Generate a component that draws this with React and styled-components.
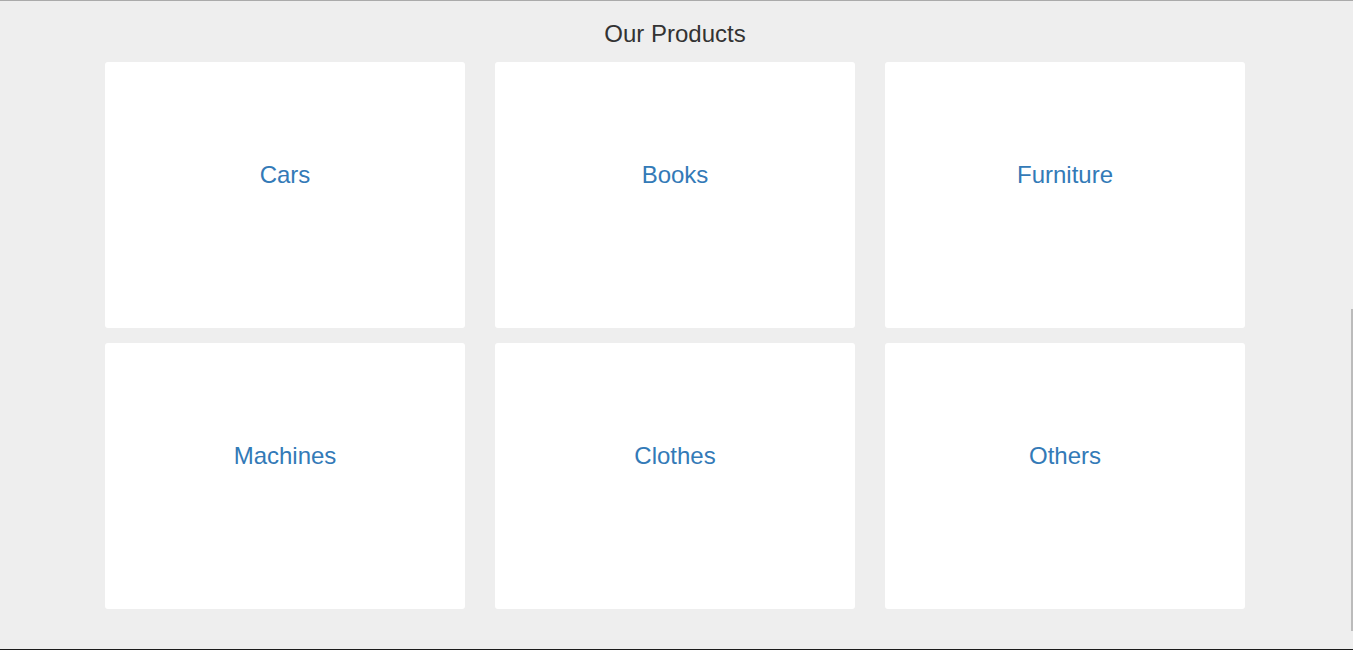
import styled, { createGlobalStyle } from 'styled-components';

const products = ['Cars', 'Books', 'Furniture', 'Machines', 'Clothes', 'Others'];

const GlobalStyle = createGlobalStyle`
  html, body {
    margin: 0;
    padding: 0;
    background: #eeeeee;
    font-family: "Liberation Sans", Arial, sans-serif;
  }
`;

const App = () => {
  return (
    <Page>
      <GlobalStyle />
      <Title>Our Products</Title>
      <Grid>
        {products.map((name) => (
          <Card key={name}>
            <CardLink href="#">{name}</CardLink>
          </Card>
        ))}
      </Grid>
      <ScrollMark />
    </Page>
  );
};

const Page = styled.div`
  box-sizing: border-box;
  height: 650px;
  padding-right: 3px;
  border-top: 1px solid #aaaaaa;
  border-bottom: 1px solid #1a1a1a;
  background: #eeeeee;
  display: flex;
  flex-direction: column;
  align-items: center;
  overflow: hidden;
`;

const Title = styled.h2`
  box-sizing: border-box;
  margin: 0;
  height: 61px;
  padding-top: 5px;
  display: flex;
  align-items: center;
  justify-content: center;
  font-size: 24px;
  font-weight: normal;
  color: #333333;
`;

const Grid = styled.div`
  display: grid;
  grid-template-columns: repeat(3, 360px);
  grid-auto-rows: 266px;
  column-gap: 30px;
  row-gap: 15px;
`;

const Card = styled.div`
  background: #ffffff;
  border-radius: 3px;
  display: flex;
  justify-content: center;
  padding-top: 100px;
  box-sizing: border-box;
`;

const CardLink = styled.a`
  font-size: 24px;
  line-height: 26px;
  height: 26px;
  color: #337ab7;
  text-decoration: none;
`;

const ScrollMark = styled.div`
  position: fixed;
  right: 0;
  top: 309px;
  width: 2px;
  height: 322px;
  background: #bbbbbb;
`;

export default App;
